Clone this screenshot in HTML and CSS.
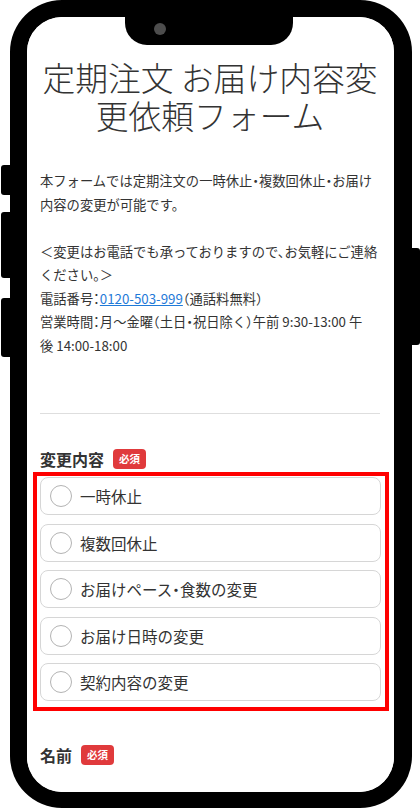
FILE: index.html
```html
<!DOCTYPE html>
<html lang="ja">
<head>
<meta charset="utf-8">
<title>定期注文 お届け内容変更依頼フォーム</title>
<link rel="stylesheet" href="styles.css">
</head>
<body>
<div class="device">
  <span class="btn btn-l1"></span>
  <span class="btn btn-l2"></span>
  <span class="btn btn-l3"></span>
  <span class="btn btn-r1"></span>
  <div class="screen">
    <div class="notch"><span class="camera"></span></div>
    <main class="content">
      <h1 class="title">定期注文 お届け内容変更依頼フォーム</h1>
      <p class="intro">本フォームでは定期注文の一時休止・複数回休止・お届け<br>内容の変更が可能です。<br><br>＜変更はお電話でも承っておりますので、お気軽にご連絡<br>ください。＞<br>電話番号：<a class="tel" href="#">0120-503-999</a>（通話料無料）<br>営業時間：月〜金曜（土日・祝日除く）午前 9:30-13:00 午<br>後 14:00-18:00</p>
      <hr class="divider">
      <div class="field-label">変更内容<span class="req">必須</span></div>
      <div class="highlight">
        <label class="option"><span class="radio"></span>一時休止</label>
        <label class="option"><span class="radio"></span>複数回休止</label>
        <label class="option"><span class="radio"></span>お届けペース・食数の変更</label>
        <label class="option"><span class="radio"></span>お届け日時の変更</label>
        <label class="option"><span class="radio"></span>契約内容の変更</label>
      </div>
      <div class="field-label name-label">名前<span class="req">必須</span></div>
    </main>
  </div>
</div>
</body>
</html>
```
FILE: styles.css
```css
html, body {
  margin: 0;
  padding: 0;
  background: #fff;
}
body {
  width: 420px;
  height: 811px;
  overflow: hidden;
  font-family: "Noto Sans CJK JP", "Noto Sans", sans-serif;
  color: #333;
}
.device {
  position: relative;
  box-sizing: border-box;
  margin-left: 10px;
  width: 402px;
  height: 808px;
  border: 17px solid #000;
  border-right-width: 18px;
  border-bottom-width: 16px;
  border-radius: 52px;
  background: #fff;
}
.btn {
  position: absolute;
  background: #000;
  width: 12px;
}
.btn-l1, .btn-l2, .btn-l3 {
  left: -26px;
  border-radius: 3px 0 0 3px;
}
.btn-l1 { top: 148px; height: 30px; }
.btn-l2 { top: 195px; height: 66px; }
.btn-l3 { top: 281px; height: 59px; }
.btn-r1 {
  right: -26px;
  top: 231px;
  height: 97px;
  border-radius: 0 3px 3px 0;
}
.screen {
  position: relative;
  height: 100%;
  overflow: hidden;
  border-radius: 35px;
  background: #fff;
}
.notch {
  position: absolute;
  top: 0;
  left: 98px;
  width: 168px;
  height: 28px;
  background: #000;
  border-radius: 0 0 22px 22px;
}
.camera {
  position: absolute;
  left: 29px;
  top: 6px;
  width: 12px;
  height: 12px;
  border-radius: 50%;
  background: #4d4d4d;
}
.content {
  padding: 41px 14px 0 13px;
}
.title {
  margin: 0;
  font-size: 32.8px;
  line-height: 38px;
  font-weight: 300;
  text-align: center;
  color: #333;
  letter-spacing: 0;
}
.intro {
  margin: 35px 0 0;
  font-size: 13.3px;
  line-height: 23.5px;
  color: #333;
  white-space: nowrap;
  font-feature-settings: "halt";
}
.tel {
  color: #1f7ad8;
  text-decoration: underline;
}
.divider {
  margin: 56px 0 0;
  border: 0;
  border-top: 1px solid #dedede;
  height: 0;
}
.field-label {
  margin-top: 33px;
  display: flex;
  align-items: center;
  font-size: 16px;
  line-height: 24px;
  font-weight: 700;
  color: #333;
}
.req {
  margin-left: 9px;
  display: inline-block;
  width: 33px;
  height: 20px;
  line-height: 20px;
  border-radius: 4px;
  background: #e03a3c;
  color: #fff;
  font-size: 10.5px;
  font-weight: 700;
  text-align: center;
}
.highlight {
  margin: 1px -9px 0 -7px;
  padding: 1px 4px 6px 3px;
  border: 4px solid #ff0000;
  display: flex;
  flex-direction: column;
  gap: 8.5px;
}
.option {
  box-sizing: border-box;
  height: 38px;
  display: flex;
  align-items: center;
  gap: 8px;
  padding-left: 9px;
  border: 1px solid #d6d6d6;
  border-radius: 8px;
  background: #fff;
  font-size: 15.5px;
  color: #333;
  font-feature-settings: "halt";
}
.radio {
  box-sizing: border-box;
  width: 22px;
  height: 22px;
  border: 1.5px solid #b3b3b3;
  border-radius: 50%;
  flex: none;
}
.name-label {
  margin-top: 32px;
}
```
